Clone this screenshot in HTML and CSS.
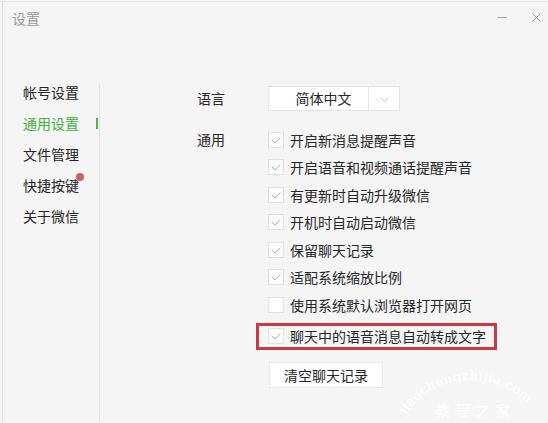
FILE: index.html
```html
<!DOCTYPE html>
<html lang="zh-CN">
  <head>
    <meta charset="UTF-8" />
    <title>设置</title>
    <link rel="stylesheet" href="styles.css">
  </head>
  <body>
    <div class="window">
      <div class="titlebar">
        <span class="title">设置</span>
        <div class="win-controls">
          <span class="min-btn"></span>
          <svg class="close-btn" width="9" height="9" viewBox="0 0 9 9">
            <path d="M0.5 0.5 L8.5 8.5 M8.5 0.5 L0.5 8.5" stroke="#9a9a9a" stroke-width="1" fill="none" />
          </svg>
        </div>
      </div>

      <div class="main">
        <div class="sidebar">
          <div class="nav-item">帐号设置</div>
          <div class="nav-item active">通用设置</div>
          <div class="nav-item">文件管理</div>
          <div class="nav-item"><span class="badge">快捷按键</span></div>
          <div class="nav-item">关于微信</div>
        </div>

        <div class="content">
          <div class="label lang-label">语言</div>
          <div class="select">
            <span class="select-value">简体中文</span>
            <span class="select-arrow">
              <svg width="9" height="5" viewBox="0 0 9 5">
                <path d="M0.5 0.5 L4.5 4.5 L8.5 0.5" stroke="#c8c8c8" stroke-width="1" fill="none" />
              </svg>
            </span>
          </div>

          <div class="label gen-label">通用</div>
          <div class="options" id="options"></div>
        </div>
      </div>

      <!-- site watermark over the bottom-right corner -->
      <svg class="watermark" width="146" height="80" viewBox="0 0 146 80">
        <defs>
          <path id="arc" d="M4 76 A80 80 0 0 1 140 76" />
        </defs>
        <text class="wm-url"><textPath href="#arc" startOffset="4">jiaochengzhijia.com</textPath></text>
        <text class="wm-name" x="36" y="74">教程之家</text>
      </svg>
    </div>

    <script>
      const options = [
        { text: "开启新消息提醒声音", checked: true },
        { text: "开启语音和视频通话提醒声音", checked: true },
        { text: "有更新时自动升级微信", checked: true },
        { text: "开机时自动启动微信", checked: true },
        { text: "保留聊天记录", checked: true },
        { text: "适配系统缩放比例", checked: true },
        { text: "使用系统默认浏览器打开网页", checked: false },
        { text: "聊天中的语音消息自动转成文字", checked: true, mark: true }
      ];

      const tick =
        '<svg width="10" height="7" viewBox="0 0 10 7"><path d="M0.5 2.5 L4 6 L9.5 0.5" stroke="#8ccb8c" stroke-width="1" fill="none" /></svg>';

      function renderOptions() {
        const list = document.getElementById("options");
        options.forEach((opt) => {
          const row = document.createElement("label");
          row.className = opt.mark ? "option marked" : "option";

          const box = document.createElement("span");
          box.className = "checkbox";
          if (opt.checked) box.innerHTML = tick;

          const text = document.createElement("span");
          text.textContent = opt.text;

          row.appendChild(box);
          row.appendChild(text);
          list.appendChild(row);
        });

        const clearBtn = document.createElement("button");
        clearBtn.className = "clear-btn";
        clearBtn.textContent = "清空聊天记录";
        list.appendChild(clearBtn);
      }

      renderOptions();
    </script>
  </body>
</html>
```

FILE: styles.css
```css
* {
  box-sizing: border-box;
  margin: 0;
  padding: 0;
}

body {
  font-family: "Noto Sans CJK SC", "Noto Sans", sans-serif;
  font-size: 14px;
  color: #262626;
  background: #f5f5f5;
  width: 548px;
  height: 423px;
  overflow: hidden;
}

.window {
  position: relative;
  margin: 1px 0 0 2px;
  height: 422px;
  border-left: 1px solid #dedede;
  border-top: 1px solid #e6e6e6;
  background: #f5f5f5;
}

.titlebar {
  height: 30px;
  display: flex;
  justify-content: space-between;
  align-items: flex-start;
  padding: 8px 7px 0 9px;
}

.title {
  color: #9c9c9c;
  line-height: 16px;
}

.win-controls {
  display: flex;
  align-items: center;
  gap: 25px;
  padding-top: 3px;
}

.min-btn {
  width: 10px;
  height: 1px;
  background: #a8a8a8;
}

.close-btn {
  display: block;
}

.main {
  display: flex;
  margin-top: 52px;
  height: 338px;
}

.sidebar {
  width: 97px;
  border-right: 1px solid #e2e2e2;
}

.nav-item {
  display: flex;
  align-items: center;
  line-height: 16px;
  height: 16px;
  margin-bottom: 15px;
  padding-left: 20px;
}

.nav-item.active {
  color: #3fae3c;
}

.nav-item.active::after {
  content: "";
  width: 2px;
  height: 11px;
  margin-left: auto;
  margin-right: 1px;
  background: #4cb54a;
}

.badge {
  position: relative;
}

.badge::after {
  content: "";
  position: absolute;
  top: -4px;
  right: -5px;
  width: 8px;
  height: 8px;
  border-radius: 50%;
  background: #d75c60;
}

.content {
  display: grid;
  grid-template-columns: 71px auto;
  grid-template-rows: 25px auto;
  row-gap: 15px;
  align-content: start;
  padding: 2px 0 0 97px;
}

.label {
  line-height: 25px;
}

.gen-label {
  line-height: 27.5px;
}

.select {
  display: flex;
  width: 132px;
  height: 25px;
  background: #fff;
  border: 1px solid #e3e3e3;
}

.select-value {
  width: 100px;
  text-align: center;
  padding-left: 10px;
  line-height: 23px;
  border-right: 1px solid #e6e6e6;
}

.select-arrow {
  flex: 1;
  display: flex;
  justify-content: center;
  align-items: center;
  padding-top: 1px;
}

.options {
  display: flex;
  flex-direction: column;
  align-items: flex-start;
}

.option {
  display: flex;
  align-items: center;
  gap: 6px;
  height: 27.5px;
}

.checkbox {
  width: 16px;
  height: 16px;
  background: #fff;
  border: 1px solid #e0e0e0;
  display: flex;
  justify-content: center;
  align-items: center;
}

.checkbox svg {
  display: block;
  margin-top: 1px;
}

.option.marked {
  height: 27px;
  margin: 4px 0 0 -12px;
  padding: 0 8px 0 9px;
  border: 3px solid #c63c42;
}

.clear-btn {
  margin: 12px 0 0 1px;
  height: 26px;
  padding: 0 14px;
  font-family: inherit;
  font-size: 14px;
  color: #262626;
  background: #fff;
  border: 1px solid #e8e8e8;
}

.watermark {
  position: absolute;
  left: 396px;
  top: 340px;
  overflow: visible;
}

.wm-url {
  font-family: "DejaVu Serif", serif;
  font-size: 13px;
  letter-spacing: 0.5px;
  fill: #fff;
}

.wm-name {
  font-family: "Noto Sans CJK SC", sans-serif;
  font-size: 15px;
  letter-spacing: 5px;
  fill: #fff;
}
```
